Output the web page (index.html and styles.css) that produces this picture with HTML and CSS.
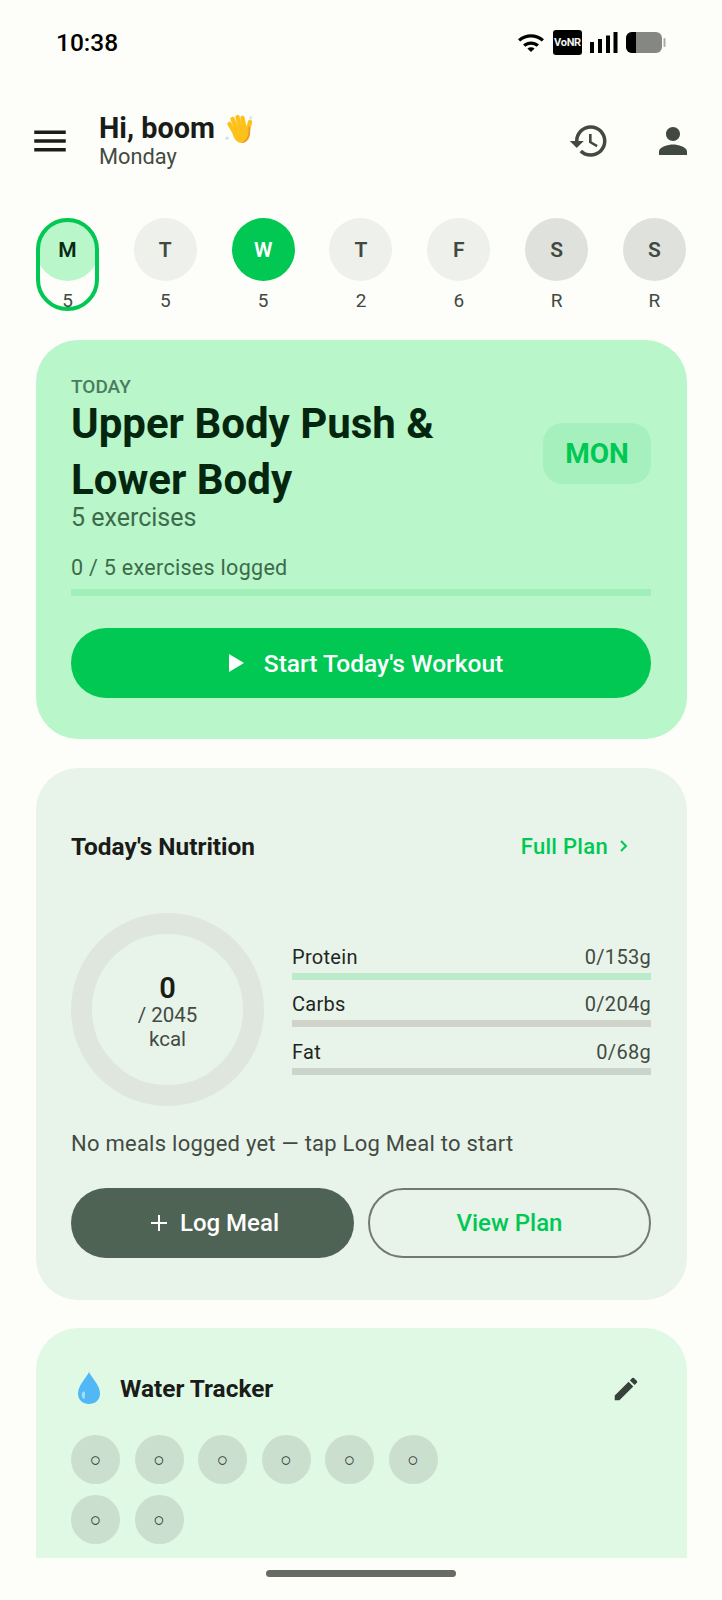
FILE: index.html
```html
<!DOCTYPE html>
<html lang="en">
<head>
    <meta charset="utf-8" />
    <title>Home</title>
    <link rel="stylesheet" href="styles.css">
</head>
<body>
<div class="screen">
    <div class="content">
        <div class="status_bar">
            <div class="clock">10:38</div>
            <div class="status_icons">
                <svg class="wifi" width="28" height="20" viewBox="0 0 28 20"><path d="M1 7.2C8.5 .6 19.5 .6 27 7.2l-2.2 2.4C18.5 4.2 9.5 4.2 3.2 9.6z"/><path d="M6 12.4c4.8-4 11.2-4 16 0l-2.3 2.4c-3.4-2.8-8-2.8-11.4 0z"/><path d="M10.4 16.4c2.2-1.5 5-1.5 7.2 0L14 20z"/></svg>
                <div class="vonr">VoNR</div>
                <svg class="signal" width="28" height="21" viewBox="0 0 28 21"><rect x="0" y="10" width="4" height="11"/><rect x="8" y="7" width="4" height="14"/><rect x="16" y="3.500" width="4" height="17.500"/><rect x="23.500" y="0" width="4" height="21"/></svg>
                <svg class="battery" width="40" height="21" viewBox="0 0 40 21"><rect x="0" y="0" width="36" height="21" rx="6" fill="#858783"/><path d="M6 0h4v21H6a6 6 0 0 1-6-6V6a6 6 0 0 1 6-6z" fill="#000"/><rect x="37.500" y="6" width="2" height="9" rx="1" fill="#a9aba7"/></svg>
            </div>
        </div>

        <div class="app_header">
            <svg class="icon" viewBox="0 0 24 24"><path fill="#1b1d1a" d="M3 18h18v-2H3v2zm0-5h18v-2H3v2zm0-5h18V6H3v2z"/></svg>
            <div class="greeting">
                <div class="hello">Hi, boom
                    <svg class="wave" width="30" height="31" viewBox="0 0 30 31">
                        <g fill="none" stroke="#fcc21b" stroke-width="4.400" stroke-linecap="round">
                            <path d="M9 16 5.500 10"/>
                            <path d="M12 13 8.500 5"/>
                            <path d="M16 12 13.500 3"/>
                            <path d="M20 12 18.500 4"/>
                            <path d="M24 16 26 8"/>
                        </g>
                        <path d="M7 14c3-3 15-5 19 0 1 6-1 15-8 15-5 0-9-4-11-15z" fill="#fcc21b"/>
                        <path d="M24 12c2 7-1 15-7 17 7 0 10-7 9-15z" fill="#f19534"/>
                        <path d="M25 2l3 1-1 4zM1 24l3-2 1 3-3 1z" fill="#cfe0ea"/>
                    </svg>
                </div>
                <div class="weekday">Monday</div>
            </div>
            <svg class="icon" viewBox="0 0 24 24"><path fill="#414941" d="M13 3c-4.970 0-9 4.030-9 9H1l3.890 3.890.07.14L9 12H6c0-3.870 3.130-7 7-7s7 3.130 7 7-3.130 7-7 7c-1.930 0-3.680-.79-4.940-2.060l-1.420 1.420C8.270 19.990 10.510 21 13 21c4.970 0 9-4.030 9-9s-4.030-9-9-9zm-1 5v5l4.280 2.540.72-1.210-3.500-2.080V8H12z"/></svg>
            <svg class="icon" viewBox="0 0 24 24"><path fill="#414941" d="M12 12c2.210 0 4-1.790 4-4s-1.790-4-4-4-4 1.790-4 4 1.790 4 4 4zm0 2c-2.670 0-8 1.340-8 4v2h16v-2c0-2.660-5.330-4-8-4z"/></svg>
        </div>

        <div class="week">
            <div class="day day_today"><div class="day_circle">M</div><div class="day_count">5</div></div>
            <div class="day"><div class="day_circle">T</div><div class="day_count">5</div></div>
            <div class="day day_done"><div class="day_circle">W</div><div class="day_count">5</div></div>
            <div class="day"><div class="day_circle">T</div><div class="day_count">2</div></div>
            <div class="day"><div class="day_circle">F</div><div class="day_count">6</div></div>
            <div class="day day_rest"><div class="day_circle">S</div><div class="day_count">R</div></div>
            <div class="day day_rest"><div class="day_circle">S</div><div class="day_count">R</div></div>
        </div>

        <div class="card workout_card">
            <div class="workout_top">
                <div class="workout_text">
                    <div class="today_label">TODAY</div>
                    <div class="workout_title">Upper Body Push &amp; Lower Body</div>
                    <div class="workout_count">5 exercises</div>
                </div>
                <div class="day_badge">MON</div>
            </div>
            <div class="logged">0 / 5 exercises logged</div>
            <div class="workout_bar"></div>
            <div class="start_button">
                <svg width="15" height="18" viewBox="0 0 15 18"><path fill="#fff" d="M0 0l15 9L0 18z"/></svg>
                <span>Start Today's Workout</span>
            </div>
        </div>

        <div class="card nutrition_card">
            <div class="nutrition_head">
                <div class="card_title">Today's Nutrition</div>
                <div class="full_plan">Full Plan
                    <svg width="12" height="14" viewBox="0 0 12 14"><path fill="none" stroke="#00c853" stroke-width="2" d="M3 2l5 5-5 5"/></svg>
                </div>
            </div>
            <div class="nutrition_body">
                <div class="ring">
                    <div class="kcal_now">0</div>
                    <div class="kcal_goal">/ 2045</div>
                    <div class="kcal_unit">kcal</div>
                </div>
                <div class="macros">
                    <div class="macro">
                        <div class="macro_row"><span class="macro_name">Protein</span><span>0/153g</span></div>
                        <div class="macro_bar bar_protein"></div>
                    </div>
                    <div class="macro">
                        <div class="macro_row"><span class="macro_name">Carbs</span><span>0/204g</span></div>
                        <div class="macro_bar bar_carbs"></div>
                    </div>
                    <div class="macro">
                        <div class="macro_row"><span class="macro_name">Fat</span><span>0/68g</span></div>
                        <div class="macro_bar bar_fat"></div>
                    </div>
                </div>
            </div>
            <div class="no_meals">No meals logged yet — tap Log Meal to start</div>
            <div class="meal_buttons">
                <div class="pill log_meal">
                    <svg width="18" height="18" viewBox="0 0 18 18"><path fill="none" stroke="#fff" stroke-width="2" d="M9 1v16M1 9h16"/></svg>
                    <span>Log Meal</span>
                </div>
                <div class="pill view_plan">View Plan</div>
            </div>
        </div>

        <div class="card water_card">
            <div class="water_head">
                <svg class="drop" width="24" height="33" viewBox="0 0 24 33">
                    <path fill="#4fb8f5" d="M12 0c2 5 11 13 11 21.500C23 28 18 32 12 32S1 28 1 21.500C1 13 10 5 12 0z"/>
                    <path fill="#a6dcf9" d="M5 21c1-2 3-2 3 0 0 3 0 6-1 6s-3-3-2-6z"/>
                </svg>
                <div class="card_title water_title">Water Tracker</div>
                <svg class="pencil" width="30" height="30" viewBox="0 0 24 24"><path fill="#37413a" d="M3 17.250V21h3.750L17.810 9.940l-3.750-3.750L3 17.250zM20.710 7.040c.39-.39.39-1.020 0-1.410l-2.340-2.340a.996.996 0 0 0-1.410 0l-1.830 1.830 3.750 3.750 1.830-1.830z"/></svg>
            </div>
            <div class="glasses">
                <div class="glass">○</div>
                <div class="glass">○</div>
                <div class="glass">○</div>
                <div class="glass">○</div>
                <div class="glass">○</div>
                <div class="glass">○</div>
                <div class="glass">○</div>
                <div class="glass">○</div>
            </div>
        </div>
    </div>
    <div class="gesture_area"><div class="gesture_bar"></div></div>
</div>
</body>
</html>
```

FILE: styles.css
```css
html, body {
    margin: 0;
    padding: 0;
}
body {
    background: #fdfef9;
    color: #1a1c19;
    font-family: "Roboto", "Liberation Sans", sans-serif;
}
.screen {
    width: 722px;
    height: 1600px;
    display: flex;
    flex-direction: column;
    overflow: hidden;
}
.content {
    height: 1558px;
    overflow: hidden;
    flex: none;
}

/* status bar */
.status_bar {
    height: 84px;
    padding: 0 56px;
    display: flex;
    justify-content: space-between;
    align-items: center;
    box-sizing: border-box;
}
.clock {
    font-size: 24.500px;
    font-weight: 500;
    color: #000;
}
.status_icons {
    display: flex;
    align-items: center;
    gap: 8px;
}
.vonr {
    width: 29px;
    height: 25px;
    background: #000;
    border-radius: 3px;
    color: #f2f2f2;
    font-size: 11px;
    font-weight: 700;
    line-height: 25px;
    text-align: center;
    letter-spacing: -0.3px;
}

/* header */
.app_header {
    height: 62px;
    margin-top: 26px;
    padding: 0 28px 0 29px;
    display: flex;
    align-items: center;
}
.icon {
    width: 42px;
    height: 42px;
    flex: none;
}
.app_header .icon:last-child {
    margin-left: 42px;
}
.greeting {
    flex: 1;
    margin: 0 0 2px 28px;
}
.hello {
    height: 32px;
    font-size: 28.800px;
    font-weight: 700;
    line-height: 32px;
    display: flex;
    align-items: center;
    gap: 9px;
}
.wave {
    margin-top: 2px;
}
.weekday {
    margin-top: 2px;
    font-size: 21.800px;
    line-height: 22px;
    color: #434a43;
}

/* week strip */
.week {
    margin-top: 46px;
    padding: 0 36px;
    display: flex;
    justify-content: space-between;
}
.day {
    width: 63px;
    height: 93px;
    position: relative;
    text-align: center;
}
.day_circle {
    width: 63px;
    height: 63px;
    border-radius: 50%;
    background: #eef0ec;
    color: #414941;
    font-size: 21px;
    font-weight: 600;
    line-height: 65px;
}
.day_count {
    margin-top: 8px;
    font-size: 19px;
    line-height: 24px;
    color: #414941;
}
.day_rest .day_circle {
    background: #dfe2dc;
}
.day_done .day_circle {
    background: #00c853;
    color: #fff;
}
.day_today .day_circle {
    background: #b9f6ca;
    color: #0a2a12;
}
.day_today::after {
    content: "";
    position: absolute;
    top: 0;
    right: 0;
    bottom: 0;
    left: 0;
    border: 4px solid #00c853;
    border-radius: 32px;
}

/* cards */
.card {
    margin: 29px 35.500px 0;
    padding: 35px 35.500px;
    border-radius: 42px;
}
.card_title {
    font-size: 24.400px;
    font-weight: 700;
}

/* workout */
.workout_card {
    background: #b9f6ca;
    padding-bottom: 41px;
}
.workout_top {
    display: flex;
    align-items: center;
}
.workout_text {
    flex: 1;
    padding-right: 60px;
}
.today_label {
    padding-top: 1px;
    font-size: 19px;
    font-weight: 500;
    line-height: 21px;
    color: #4a7c5e;
}
.workout_title {
    margin-top: -1px;
    font-size: 42px;
    line-height: 56px;
    font-weight: 700;
    color: #05260e;
}
.workout_count {
    font-size: 25px;
    line-height: 20px;
    color: #3c6b4b;
}
.day_badge {
    width: 108px;
    height: 61px;
    margin-top: 4px;
    background: #a5f0bc;
    border-radius: 20px;
    color: #00c853;
    font-size: 28px;
    font-weight: 700;
    line-height: 61px;
    text-align: center;
    flex: none;
}
.logged {
    margin-top: 28px;
    font-size: 21.500px;
    line-height: 24px;
    letter-spacing: 0.3px;
    color: #3c6b4b;
}
.workout_bar {
    height: 7px;
    margin-top: 9px;
    background: #a0efb8;
}
.start_button {
    height: 70px;
    margin-top: 32px;
    padding-left: 10px;
    background: #00c853;
    border-radius: 35px;
    color: #fff;
    font-size: 24.500px;
    font-weight: 500;
    display: flex;
    align-items: center;
    justify-content: center;
    gap: 20px;
}

/* nutrition */
.nutrition_card {
    background: #e8f4e9;
    padding-top: 0;
    padding-bottom: 42px;
}
.nutrition_head {
    height: 121px;
    display: flex;
    align-items: center;
    justify-content: space-between;
    padding-top: 35px;
    box-sizing: border-box;
}
.full_plan {
    color: #00c853;
    font-size: 22px;
    font-weight: 500;
    letter-spacing: 0.3px;
    padding-right: 21px;
    display: flex;
    align-items: center;
    gap: 10px;
}
.nutrition_body {
    margin-top: 24px;
    display: flex;
    align-items: center;
    gap: 28px;
}
.ring {
    width: 193px;
    height: 193px;
    padding-top: 3px;
    border: 21px solid #dfe6dd;
    border-radius: 50%;
    box-sizing: border-box;
    flex: none;
    display: flex;
    flex-direction: column;
    align-items: center;
    justify-content: center;
}
.kcal_now {
    font-size: 29px;
    line-height: 32px;
    font-weight: 600;
}
.kcal_goal {
    font-size: 20.500px;
    line-height: 23px;
    color: #434a43;
}
.kcal_unit {
    font-size: 20.500px;
    line-height: 24px;
    color: #434a43;
}
.macros {
    flex: 1;
    display: flex;
    flex-direction: column;
    gap: 12.500px;
}
.macro_row {
    display: flex;
    justify-content: space-between;
    font-size: 20px;
    line-height: 24px;
    color: #434a43;
    letter-spacing: 0.3px;
    margin-bottom: 4px;
}
.macro_name {
    color: #1f261f;
}
.macro_bar {
    height: 7px;
}
.bar_protein {
    background: #bcebcb;
}
.bar_carbs {
    background: #cfd3ca;
}
.bar_fat {
    background: #cbd4ca;
}
.no_meals {
    margin-top: 25px;
    font-size: 22px;
    line-height: 26px;
    letter-spacing: 0.25px;
    color: #434a43;
}
.meal_buttons {
    margin-top: 31px;
    display: flex;
    gap: 14px;
}
.pill {
    flex: 1 1 50%;
    height: 70px;
    border-radius: 35px;
    box-sizing: border-box;
    font-size: 24px;
    font-weight: 500;
    display: flex;
    align-items: center;
    justify-content: center;
}
.log_meal {
    background: #4f6354;
    color: #fff;
    gap: 12px;
}
.log_meal svg {
    margin-left: 4px;
}
.view_plan {
    border: 2px solid #74796f;
    color: #00c853;
}

/* water */
.water_card {
    margin-top: 28px;
    padding-top: 34px;
    padding-bottom: 90px;
    background: #e0f9e5;
}
.water_head {
    height: 53px;
    display: flex;
    align-items: center;
}
.drop {
    margin-left: 6px;
    flex: none;
}
.water_title {
    flex: 1;
    margin-left: 19px;
}
.pencil {
    margin-right: 10px;
}
.glasses {
    margin-top: 20px;
    max-width: 400px;
    display: flex;
    flex-wrap: wrap;
    gap: 11px 14.500px;
}
.glass {
    width: 49px;
    height: 49px;
    border-radius: 50%;
    background: #cbdfcf;
    color: #2a312b;
    font-size: 19px;
    line-height: 50px;
    text-align: center;
}

/* navigation gesture */
.gesture_area {
    flex: 1;
    padding-top: 12px;
    box-sizing: border-box;
}
.gesture_bar {
    width: 190px;
    height: 7px;
    margin: 0 auto;
    border-radius: 4px;
    background: #666b64;
}
```
